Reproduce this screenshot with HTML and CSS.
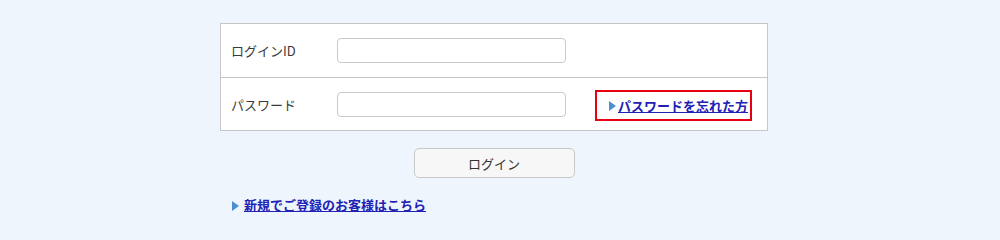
FILE: index.html
```html
<!DOCTYPE html>
<html lang="ja">
<head>
<meta charset="utf-8">
<link rel="stylesheet" href="styles.css">
</head>
<body>
<div class="page">
  <div class="login-box">
    <div class="row">
      <label class="label">ログインID</label>
      <input class="field" type="text">
    </div>
    <div class="row row-second">
      <label class="label">パスワード</label>
      <input class="field" type="password">
      <div class="forgot">
        <span class="tri"></span><a class="link" href="#">パスワードを忘れた方</a>
      </div>
    </div>
  </div>
  <div class="actions">
    <button class="btn" type="button">ログイン</button>
  </div>
  <div class="register">
    <span class="tri"></span><a class="link" href="#">新規でご登録のお客様はこちら</a>
  </div>
</div>
</body>
</html>
```

FILE: styles.css
```css
html, body {
  margin: 0;
  padding: 0;
  background: #eef5fd;
  font-family: "Noto Sans CJK JP", "Noto Sans", sans-serif;
  color: #333;
}
.page {
  padding: 23px 0 0 220px;
  width: 548px;
}
.login-box {
  background: #fff;
  border: 1px solid #c6c6c6;
}
.row {
  display: flex;
  align-items: center;
  height: 53px;
  padding-left: 10px;
}
.row-second {
  height: 52px;
  border-top: 1px solid #c6c6c6;
}
.label {
  width: 106px;
  font-size: 13px;
  color: #3a3a3a;
}
.field {
  box-sizing: border-box;
  width: 229px;
  height: 25px;
  border: 1px solid #c9c9c9;
  border-radius: 4px;
  background: #fff;
  margin: 0;
  padding: 0 6px;
}
.row-second .field {
  margin-top: 1px;
}
.forgot {
  margin-left: auto;
  margin-right: 15px;
  margin-top: 2px;
  box-sizing: border-box;
  height: 31px;
  border: 2px solid #e60012;
  padding: 0 2px 0 12px;
  display: flex;
  align-items: center;
}
.tri {
  width: 0;
  height: 0;
  border-top: 5px solid transparent;
  border-bottom: 5px solid transparent;
  border-left: 7px solid #4a8fd2;
  margin-right: 2px;
  margin-top: 2px;
}
.link {
  color: #2121b5;
  font-size: 13px;
  font-weight: bold;
  text-decoration: underline;
}
.actions {
  display: flex;
  justify-content: center;
  margin-top: 17px;
}
.btn {
  width: 161px;
  height: 30px;
  border: 1px solid #c9c9c9;
  border-radius: 5px;
  background: #f7f7f7;
  font-family: "Noto Sans CJK JP", "Noto Sans", sans-serif;
  font-size: 13px;
  color: #333;
  padding: 0;
}
.register {
  display: flex;
  align-items: center;
  margin-top: 17px;
  padding-left: 12px;
}
.register .tri {
  margin-right: 5px;
}
```
